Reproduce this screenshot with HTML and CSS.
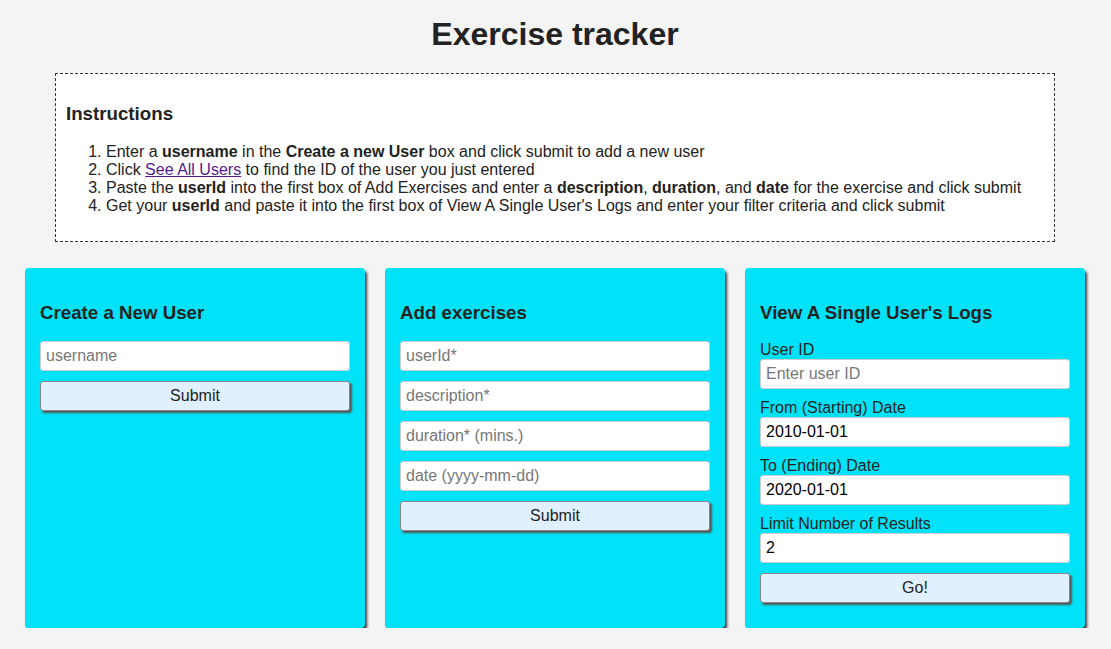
FILE: index.html
```html
<!DOCTYPE html>
<html lang="en">
<head>
<meta charset="utf-8">
<title>Exercise tracker</title>
<link rel="stylesheet" href="styles.css">
</head>
<body>
<h1 class="title">Exercise tracker</h1>
<section class="instructions">
  <h3 class="inst-title">Instructions</h3>
  <ol class="inst-list">
    <li>Enter a <b>username</b> in the <b>Create a new User</b> box and click submit to add a new user</li>
    <li>Click <a class="link" href="#">See All Users</a> to find the ID of the user you just entered</li>
    <li>Paste the <b>userId</b> into the first box of Add Exercises and enter a <b>description</b>, <b>duration</b>, and <b>date</b> for the exercise and click submit</li>
    <li>Get your <b>userId</b> and paste it into the first box of View A Single User's Logs and enter your filter criteria and click submit</li>
  </ol>
</section>
<main class="cards">
  <form class="card">
    <h3 class="card-title">Create a New User</h3>
    <input class="field" type="text" placeholder="username">
    <button class="btn" type="button">Submit</button>
  </form>
  <form class="card">
    <h3 class="card-title">Add exercises</h3>
    <input class="field" type="text" placeholder="userId*">
    <input class="field" type="text" placeholder="description*">
    <input class="field" type="text" placeholder="duration* (mins.)">
    <input class="field" type="text" placeholder="date (yyyy-mm-dd)">
    <button class="btn" type="button">Submit</button>
  </form>
  <form class="card">
    <h3 class="card-title">View A Single User's Logs</h3>
    <label class="label">User ID</label>
    <input class="field" type="text" placeholder="Enter user ID">
    <label class="label">From (Starting) Date</label>
    <input class="field" type="text" value="2010-01-01">
    <label class="label">To (Ending) Date</label>
    <input class="field" type="text" value="2020-01-01">
    <label class="label">Limit Number of Results</label>
    <input class="field" type="text" value="2">
    <button class="btn" type="button">Go!</button>
  </form>
</main>
</body>
</html>
```
FILE: styles.css
```css
html, body {
  margin: 0;
  padding: 0;
}
body {
  background: #f4f4f4;
  color: #222;
  font-family: "Liberation Sans", Arial, Helvetica, sans-serif;
  font-size: 16px;
  padding-right: 1px;
}
.title {
  font-size: 32px;
  font-weight: bold;
  text-align: center;
  margin: 16px 0 20px;
  line-height: 37px;
}
.instructions {
  box-sizing: border-box;
  width: 1000px;
  margin: 0 auto;
  background: #fff;
  border: 1px dashed #333;
  padding: 10px;
}
.inst-title {
  font-size: 18.72px;
  margin: 18.72px 0;
}
.inst-list {
  margin: 17px 0 16px;
  padding-left: 40px;
  line-height: 18px;
}
.link {
  color: #551a8b;
  text-decoration: underline;
}
.cards {
  width: 1060px;
  margin: 26px auto 0;
  display: flex;
  gap: 20px;
}
.card {
  box-sizing: border-box;
  width: 340px;
  height: 360px;
  background: #00e2f7;
  border-radius: 4px;
  box-shadow: 2px 3px 3px #333;
  padding: 15px 15px;
  display: flex;
  flex-direction: column;
}
.card-title {
  font-size: 18.72px;
  margin: 18.72px 0 17px;
  line-height: 22px;
}
.label {
  display: block;
  line-height: 18px;
  height: 18px;
}
.field {
  box-sizing: border-box;
  width: 100%;
  height: 30px;
  margin: 0 0 10px;
  padding: 0 5px;
  border: 1px solid #ccc;
  border-radius: 3px;
  background: #fff;
  font-family: "Liberation Sans", Arial, sans-serif;
  font-size: 16px;
  color: #000;
}
.field::placeholder {
  color: #777;
}
.btn {
  box-sizing: border-box;
  width: 100%;
  height: 30px;
  margin: 0;
  border: 1px solid #888;
  border-radius: 3px;
  background: #e0f0fe;
  box-shadow: 2px 2px 2px #555;
  font-family: "Liberation Sans", Arial, sans-serif;
  font-size: 16px;
  color: #222;
}
```
